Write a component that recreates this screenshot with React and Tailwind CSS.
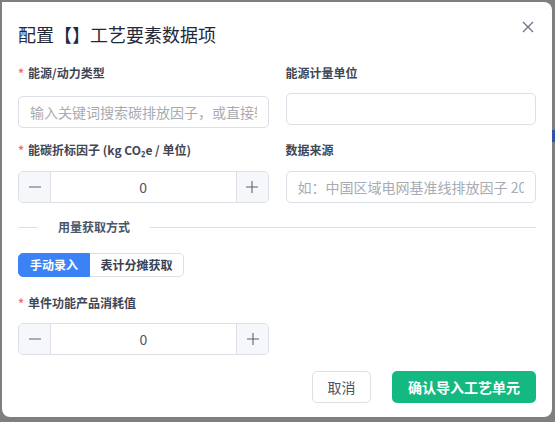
import { useState } from 'react';

const FONT = { fontFamily: '"Noto Sans CJK SC", "Noto Sans", sans-serif' };

const Label = ({ required, children, className = '' }) => (
  <div className={`flex h-5 items-center text-[12px] font-semibold text-[#3f4654] ${className}`}>
    {required && <span className="mr-1 text-[#f56c6c]">*</span>}
    <span>{children}</span>
  </div>
);

const Stepper = ({ value, onChange }) => (
  <div className="flex h-8 w-full overflow-hidden rounded-[5px] border border-[#dcdfe6] bg-white">
    <button
      type="button"
      className="flex w-8 items-center justify-center border-r border-[#dcdfe6] bg-[#f5f7fa] text-[#606266]"
      onClick={() => onChange(value - 1)}
    >
      <svg className="h-[14px] w-[14px]" viewBox="0 0 14 14" fill="none" stroke="currentColor" strokeWidth={1.1}>
        <path d="M1 7h12" />
      </svg>
    </button>
    <div className="flex flex-1 items-center justify-center text-[14px] text-[#4b5563]">{value}</div>
    <button
      type="button"
      className="flex w-8 items-center justify-center border-l border-[#dcdfe6] bg-[#f5f7fa] text-[#606266]"
      onClick={() => onChange(value + 1)}
    >
      <svg className="h-[14px] w-[14px]" viewBox="0 0 14 14" fill="none" stroke="currentColor" strokeWidth={1.1}>
        <path d="M1 7h12M7 1v12" />
      </svg>
    </button>
  </div>
);

const TextInput = ({ placeholder }) => (
  <input
    className="h-8 w-full rounded-[5px] border border-[#dcdfe6] bg-white px-[11px] text-[14px] text-[#303133] outline-none placeholder:text-[#a8abb2]"
    placeholder={placeholder}
  />
);

export default function App() {
  const [factor, setFactor] = useState(0);
  const [usage, setUsage] = useState(0);
  const [mode, setMode] = useState('manual');

  return (
    <div className="flex h-[422px] w-[555px] bg-[#7f7f7f] pl-[2px] pt-[2px]" style={FONT}>
      {/* Dialog */}
      <div className="flex h-[415px] w-[550px] flex-col rounded-lg rounded-tl-none bg-white px-4 pt-[20px]">
        {/* Header */}
        <div className="flex items-start justify-between">
          <h2 className="text-[18px] leading-6 text-[#1f2937]">配置【】工艺要素数据项</h2>
          <button type="button" className="mr-[2px] mt-[-1px] text-[#6b7280]">
            <svg className="h-[12px] w-[12px]" viewBox="0 0 12 12" fill="none" stroke="currentColor" strokeWidth={1.3}>
              <path d="M1 1l10 10M11 1L1 11" />
            </svg>
          </button>
        </div>

        {/* Row 1 */}
        <div className="mt-[17px] grid grid-cols-2 gap-x-[17px]">
          <div>
            <Label required>能源/动力类型</Label>
            <div className="mt-[13px]">
              <TextInput placeholder="输入关键词搜索碳排放因子，或直接输入" />
            </div>
          </div>
          <div>
            <Label>能源计量单位</Label>
            <div className="mt-[10px]">
              <TextInput placeholder="" />
            </div>
          </div>
        </div>

        {/* Row 2 */}
        <div className="mt-[12px] grid grid-cols-2 gap-x-[17px]">
          <div>
            <Label required>能碳折标因子 (kg CO₂e / 单位)</Label>
            <div className="mt-[11px]">
              <Stepper value={factor} onChange={setFactor} />
            </div>
          </div>
          <div>
            <Label>数据来源</Label>
            <div className="mt-[11px]">
              <TextInput placeholder="如：中国区域电网基准线排放因子 2023" />
            </div>
          </div>
        </div>

        {/* Divider */}
        <div className="mt-[14px] flex items-center">
          <div className="h-px w-5 bg-[#dcdfe6]" />
          <span className="px-5 text-[12px] font-semibold leading-5 text-[#4b5563]">用量获取方式</span>
          <div className="h-px flex-1 bg-[#dcdfe6]" />
        </div>

        {/* Segmented */}
        <div className="mt-[16px] flex">
          <button
            type="button"
            onClick={() => setMode('manual')}
            className={`h-6 w-[72px] rounded-l-[5px] border text-[12px] font-semibold ${
              mode === 'manual' ? 'border-[#3b82f6] bg-[#3b82f6] text-white' : 'border-[#dcdfe6] bg-white text-[#374151]'
            }`}
          >
            手动录入
          </button>
          <button
            type="button"
            onClick={() => setMode('meter')}
            className={`h-6 w-[94px] rounded-r-[5px] border border-l-0 text-[12px] font-semibold ${
              mode === 'meter' ? 'border-[#3b82f6] bg-[#3b82f6] text-white' : 'border-[#dcdfe6] bg-white text-[#374151]'
            }`}
          >
            表计分摊获取
          </button>
        </div>

        {/* Row 3 */}
        <div className="mt-[16px] w-[251px]">
          <Label required>单件功能产品消耗值</Label>
          <div className="mt-[10px]">
            <Stepper value={usage} onChange={setUsage} />
          </div>
        </div>

        {/* Footer */}
        <div className="mt-4 flex justify-end gap-[21px]">
          <button
            type="button"
            className="h-8 w-[59px] rounded-[5px] border border-[#dcdfe6] bg-white text-[14px] text-[#4b5563]"
          >
            取消
          </button>
          <button
            type="button"
            className="h-8 w-[144px] rounded-[5px] bg-[#14b981] text-[14px] font-semibold text-white"
          >
            确认导入工艺单元
          </button>
        </div>
      </div>

      {/* underlying page edge */}
      <div className="flex flex-1 flex-col pt-[128px]">
        <div className="h-[12px] w-full bg-[#2f55a4]" />
      </div>
    </div>
  );
}
